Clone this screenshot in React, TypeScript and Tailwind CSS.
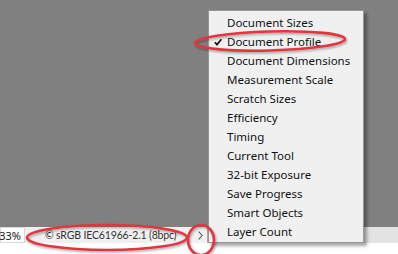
import React from 'react';

const ITEMS = [
  'Document Sizes',
  'Document Profile',
  'Document Dimensions',
  'Measurement Scale',
  'Scratch Sizes',
  'Efficiency',
  'Timing',
  'Current Tool',
  '32-bit Exposure',
  'Save Progress',
  'Smart Objects',
  'Layer Count',
];

const font = { fontFamily: '"Noto Sans", "Open Sans", sans-serif' };

export default function App() {
  return (
    <div className="relative w-[398px] h-[254px] overflow-hidden bg-white flex flex-col" style={font}>
      {/* canvas area */}
      <div className="h-[227px] bg-[#808080]" />

      {/* status bar */}
      <div className="h-[16px] flex items-stretch bg-[#f0f0f0] text-[11px] text-[#222]">
        <div className="w-[25px] bg-white border border-[#d8d8d8] flex items-center justify-end pr-[3px] leading-none">
          33%
        </div>
        <div className="w-[168px] flex items-center pl-[20px] leading-none font-['Lato',sans-serif] text-[10.5px] tracking-[-0.15px] text-[#333]">
          © sRGB IEC61966-2.1 (8bpc)
        </div>
        <div className="w-[15px] flex items-center justify-center border-r border-[#a8a8a8]">
          <svg width="5" height="9" viewBox="0 0 5 9">
            <path d="M0.7 0.7 L4.2 4.5 L0.7 8.3" fill="none" stroke="#555" strokeWidth="1.1" />
          </svg>
        </div>
        <div className="flex-1 bg-[#e3e3e3]" />
      </div>
      <div className="flex-1 bg-white" />

      {/* flyout menu */}
      <div className="absolute left-[208px] top-[10px] w-[156px] h-[233px] bg-[#f0f0f0] border border-[#979797] shadow-[3px_3px_3px_rgba(0,0,0,0.35)] pt-[2px]">
        {ITEMS.map((item, i) => (
          <div key={item} className="relative h-[19px] flex items-center pl-[18px] text-[11.5px] text-[#111] leading-none">
            {i === 1 && (
              <svg className="absolute left-[5px] top-[6px]" width="8" height="8" viewBox="0 0 8 8">
                <path d="M0.8 4.2 L3 6.6 L7.4 1.2" fill="none" stroke="#111" strokeWidth="1.7" />
              </svg>
            )}
            {item}
          </div>
        ))}
      </div>

      {/* annotation rings */}
      <svg className="absolute left-0 top-0 pointer-events-none" width="398" height="254">
        <defs>
          <filter id="sh" x="-20%" y="-50%" width="140%" height="200%">
            <feDropShadow dx="1" dy="1.5" stdDeviation="1.2" floodColor="#000" floodOpacity="0.35" />
          </filter>
        </defs>
        <g fill="none" stroke="#e2363d" strokeWidth="2.6" filter="url(#sh)">
          <ellipse cx="270" cy="41" rx="75" ry="9.5" transform="rotate(-1.5 270 41)" />
          <ellipse cx="107" cy="237.5" rx="80" ry="12.5" />
          <ellipse cx="201" cy="240" rx="13" ry="15" />
        </g>
      </svg>
    </div>
  );
}
